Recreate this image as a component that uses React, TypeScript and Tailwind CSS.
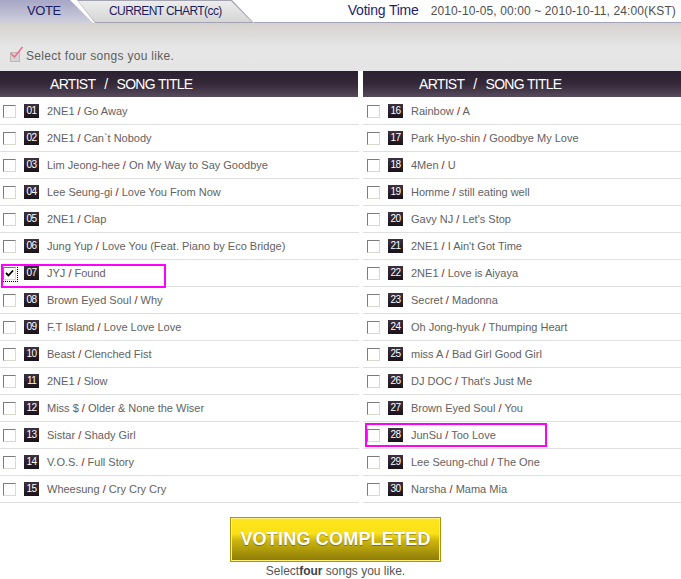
import React from 'react';

type Song = { no: string; artist: string; title: string };

const left: Song[] = [
  { no: '01', artist: '2NE1', title: 'Go Away' },
  { no: '02', artist: '2NE1', title: 'Can`t Nobody' },
  { no: '03', artist: 'Lim Jeong-hee', title: 'On My Way to Say Goodbye' },
  { no: '04', artist: 'Lee Seung-gi', title: 'Love You From Now' },
  { no: '05', artist: '2NE1', title: 'Clap' },
  { no: '06', artist: 'Jung Yup', title: 'Love You (Feat. Piano by Eco Bridge)' },
  { no: '07', artist: 'JYJ', title: 'Found' },
  { no: '08', artist: 'Brown Eyed Soul', title: 'Why' },
  { no: '09', artist: 'F.T Island', title: 'Love Love Love' },
  { no: '10', artist: 'Beast', title: 'Clenched Fist' },
  { no: '11', artist: '2NE1', title: 'Slow' },
  { no: '12', artist: 'Miss $', title: 'Older & None the Wiser' },
  { no: '13', artist: 'Sistar', title: 'Shady Girl' },
  { no: '14', artist: 'V.O.S.', title: 'Full Story' },
  { no: '15', artist: 'Wheesung', title: 'Cry Cry Cry' },
];

const right: Song[] = [
  { no: '16', artist: 'Rainbow', title: 'A' },
  { no: '17', artist: 'Park Hyo-shin', title: 'Goodbye My Love' },
  { no: '18', artist: '4Men', title: 'U' },
  { no: '19', artist: 'Homme', title: 'still eating well' },
  { no: '20', artist: 'Gavy NJ', title: "Let's Stop" },
  { no: '21', artist: '2NE1', title: "I Ain't Got Time" },
  { no: '22', artist: '2NE1', title: 'Love is Aiyaya' },
  { no: '23', artist: 'Secret', title: 'Madonna' },
  { no: '24', artist: 'Oh Jong-hyuk', title: 'Thumping Heart' },
  { no: '25', artist: 'miss A', title: 'Bad Girl Good Girl' },
  { no: '26', artist: 'DJ DOC', title: "That's Just Me" },
  { no: '27', artist: 'Brown Eyed Soul', title: 'You' },
  { no: '28', artist: 'JunSu', title: 'Too Love' },
  { no: '29', artist: 'Lee Seung-chul', title: 'The One' },
  { no: '30', artist: 'Narsha', title: 'Mama Mia' },
];

const CheckBox = ({ checked }: { checked?: boolean }) => (
  <span
    className={`flex w-[13px] h-[13px] shrink-0 items-center justify-center border border-t-[#7c7c7c] border-l-[#7c7c7c] border-b-[#dcd8d0] border-r-[#dcd8d0] bg-white ${
      checked ? 'outline outline-1 outline-dotted outline-black outline-offset-[1px]' : ''
    }`}
  >
    {checked && (
      <svg width="9" height="9" viewBox="0 0 9 9">
        <path d="M1 4 L3.5 6.5 L8 1.5" fill="none" stroke="#000" strokeWidth="1.8" />
      </svg>
    )}
  </span>
);

const Row = ({ song, pad, checked, mark }: { song: Song; pad: string; checked?: boolean; mark?: 'left' | 'right' }) => (
  <div className={`relative flex items-center h-[27px] ${pad} border-b border-[#dfdfdf]`}>
    <CheckBox checked={checked} />
    <span className="ml-[8px] flex w-[15px] h-[14px] shrink-0 items-center justify-center bg-gradient-to-b from-[#3b3140] to-[#1b1219] text-[10px] leading-none text-white tracking-[-0.6px]">
      {song.no}
    </span>
    <span className="ml-[8px] text-[11px] text-[#626262] whitespace-nowrap">
      {song.artist} <span className="text-[#8b1414]">/</span> {song.title}
    </span>
    {mark === 'left' && (
      <span className="absolute left-[1px] top-[4px] w-[165px] h-[24px] border-2 border-[#ff00ff]" />
    )}
    {mark === 'right' && (
      <span className="absolute left-[2px] top-[1px] w-[182px] h-[24px] border-2 border-[#ff00ff]" />
    )}
  </div>
);

const HeaderBar = ({ pad }: { pad: string }) => (
  <div
    className={`flex items-center h-[26px] ${pad} bg-gradient-to-b from-[#2b2131] via-[#342839] to-[#564a5c] text-white text-[14px] tracking-[-0.7px]`}
  >
    ARTIST<span className="mx-[9px]">/</span>SONG TITLE
  </div>
);

export default function App() {
  return (
    <div className="w-[681px] h-[579px] bg-white overflow-hidden font-['Liberation_Sans',Arial,sans-serif]">
      {/* ── Tabs + voting time ── */}
      <div className="flex h-[23px]">
        <div className="w-[96px] h-[23px] shrink-0 pl-[27px] pt-[4px] bg-gradient-to-b from-[#a6a6c6] to-[#d0d0dc] [clip-path:polygon(0_0,70px_0,93px_23px,0_23px)] text-[13px] leading-none text-[#1c1c5e] tracking-[-0.4px]">
          VOTE
        </div>
        <div className="-ml-[20px] w-[178px] h-[23px] shrink-0 p-[1px] bg-[#a4a4b0] [clip-path:polygon(1px_0,156px_0,178px_23px,19px_23px)]">
          <div className="h-full pl-[32px] pt-[4px] bg-gradient-to-b from-[#ececec] to-[#d6d6d6] [clip-path:polygon(1px_0,154px_0,175px_21px,18px_21px)] text-[12px] leading-none text-[#1c1c5e] tracking-[-0.6px] whitespace-nowrap">
            CURRENT CHART(cc)
          </div>
        </div>
        <div className="flex flex-1 items-center justify-end pr-[5px] border-b border-[#a2a2b6] pb-[1px]">
          <span className="text-[14px] text-[#1e1e72] tracking-[-0.2px]">Voting Time</span>
          <span className="ml-[12px] text-[12px] text-[#4f4f4f] tracking-[0.12px]">2010-10-05, 00:00 ~ 2010-10-11, 24:00(KST)</span>
        </div>
      </div>

      {/* ── Instruction band ── */}
      <div className="flex items-end h-[48px] pl-[8px] pb-[8px] bg-gradient-to-b from-[#d6d2d0] via-[#e6e6e6] to-[#e5e5e5]">
        <svg width="16" height="16" viewBox="0 0 16 16" className="mb-[1px]">
          <rect x="2.5" y="6.5" width="9" height="9" fill="#d8d2d4" stroke="#bdb6b8" />
          <path d="M3 7.5 L6.5 11 L14.5 1" fill="none" stroke="#e7758e" strokeWidth="1.6" />
        </svg>
        <span className="ml-[2px] text-[12px] leading-[14px] text-[#5e5e5e] tracking-[0.3px]">
          Select four songs you like.
        </span>
      </div>

      {/* ── Song lists ── */}
      <div className="flex gap-[4px]">
        <div className="w-[359px]">
          <div className="w-[358px]">
            <HeaderBar pad="pl-[50px]" />
          </div>
          <div className="mt-[1px]">
            {left.map(s => (
              <Row key={s.no} song={s} pad="pl-[3px]" checked={s.no === '07'} mark={s.no === '07' ? 'left' : undefined} />
            ))}
          </div>
        </div>
        <div className="flex-1">
          <HeaderBar pad="pl-[56px]" />
          <div className="mt-[1px]">
            {right.map(s => (
              <Row key={s.no} song={s} pad="pl-[4px]" mark={s.no === '28' ? 'right' : undefined} />
            ))}
          </div>
        </div>
      </div>

      {/* ── Submit ── */}
      <div className="w-[671px] flex flex-col items-center mt-[14px]">
        <button className="w-[211px] h-[45px] border border-[#a8960c] shadow-[inset_0_0_0_1px_#fff07a] bg-[linear-gradient(to_bottom,#fde41c_0%,#fbe117_36%,#cdb70f_52%,#8b7907_100%)] text-white text-[18px] font-bold tracking-[0.2px] [text-shadow:0_1px_1px_rgba(0,0,0,0.35)]">
          VOTING COMPLETED
        </button>
        <p className="mt-[2px] text-[12px] leading-[14px] text-[#555]">
          Select<b className="text-[#444]">four</b> songs you like.
        </p>
      </div>
    </div>
  );
}
